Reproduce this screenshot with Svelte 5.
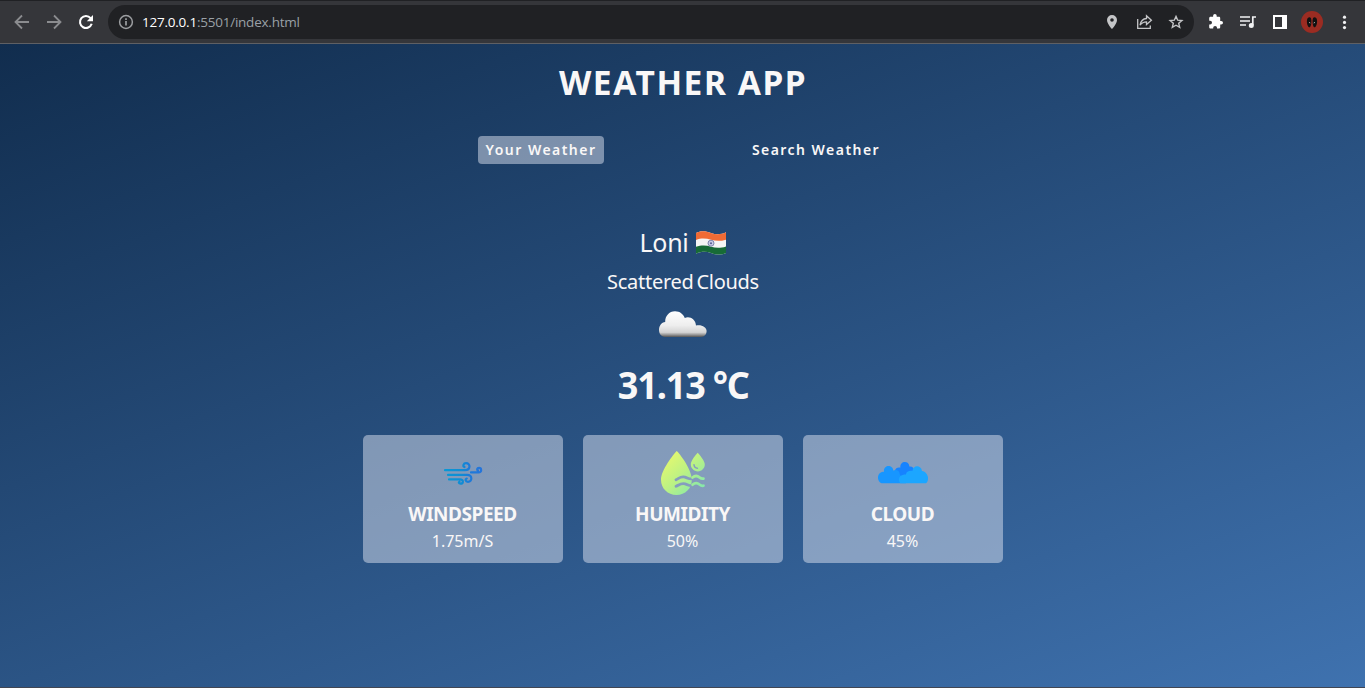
<script>
  const details = [
    { kind: 'wind', label: 'WINDSPEED', value: '1.75m/S' },
    { kind: 'humidity', label: 'HUMIDITY', value: '50%' },
    { kind: 'cloud', label: 'CLOUD', value: '45%' }
  ];
</script>

<div class="window">
  <header class="toolbar">
    <svg class="nav" viewBox="0 0 108 43" fill="none" stroke="#8b8c8f" stroke-width="1.8">
      <path d="M29 22H16M22 15.5L15.5 22L22 28.5" />
      <path d="M47 22H60M54 15.5L60.5 22L54 28.5" />
      <path stroke="#fff" stroke-width="2.1" d="M90.6 18.1A6 6 0 1 0 91.7 23.8" />
      <path fill="#fff" stroke="none" d="M93 15V21.2H86.8Z" />
    </svg>
    <div class="address">
      <svg class="info" viewBox="0 0 16 16" fill="none" stroke="#9c9ea1" stroke-width="1.5">
        <circle cx="8" cy="8" r="6.4" /><path stroke-width="1.7" d="M8 7V11.6M8 4.3V6" />
      </svg>
      <span class="url"><b>127.0.0.1</b>:5501/index.html</span>
      <svg class="actions" viewBox="1100 0 90 34" fill="none" stroke="#c4c5c7" stroke-width="1.4">
        <path fill="#c4c5c7" stroke="none" fill-rule="evenodd" d="M1112 10A5 5 0 0 0 1107 15C1107 18.8 1112 24 1112 24S1117 18.8 1117 15A5 5 0 0 0 1112 10ZM1112 13.2A1.8 1.8 0 1 1 1112 16.8A1.8 1.8 0 1 1 1112 13.2Z" />
        <path stroke-width="1.3" d="M1137.7 14V23.3H1150.3V20.5M1140 20.2C1140.8 16 1143 13.7 1146.5 13.5V10.8L1151.4 15.3L1146.5 19.6V16.8C1143.6 16.8 1141.7 17.8 1140 20.2Z" />
        <path d="M1176 11.4L1177.7 15.2L1181.9 15.6L1178.7 18.3L1179.7 22.4L1176 20.2L1172.3 22.4L1173.3 18.3L1170.1 15.6L1174.3 15.2Z" />
      </svg>
    </div>
    <svg class="tools" viewBox="1194 0 171 43">
      <path fill="#fff" d="M1221.2 21H1220.2V18.1C1220.2 17.2 1219.6 16.7 1218.8 16.7H1216.7V15.8A1.8 1.8 0 0 0 1213.1 15.8V16.7H1210.6C1209.8 16.7 1209.2 17.3 1209.2 18.1V20.7H1210.1A1.9 1.9 0 0 1 1210.1 24.5H1209.2V27.2C1209.2 28 1209.8 28.6 1210.6 28.6H1213.2V27.8A1.9 1.9 0 0 1 1217 27.8V28.6H1218.8C1219.6 28.6 1220.2 28 1220.2 27.2V24.6H1221.2A1.8 1.8 0 0 0 1221.2 21Z" />
      <path fill="none" stroke="#f1f2f3" stroke-width="1.7" d="M1240 17H1250M1240 21H1250M1240 25H1246M1252.8 25V17H1256" />
      <circle cx="1251.3" cy="25.4" r="2.5" fill="#f1f2f3" />
      <path fill="#fff" fill-rule="evenodd" d="M1273 15H1287V29H1273ZM1275 17V27H1282V17Z" />
      <circle cx="1312" cy="22" r="11" fill="#9b2c22" />
      <path fill="#111" d="M1307.4 18.4C1309.5 16.1 1311.4 17.2 1311.4 20.5C1311.4 24 1310.8 27.4 1309.3 27.3C1307.2 26.5 1306.2 21.2 1307.4 18.4ZM1316.6 18.4C1314.5 16.1 1312.6 17.2 1312.6 20.5C1312.6 24 1313.2 27.4 1314.7 27.3C1316.8 26.5 1317.8 21.2 1316.6 18.4Z" />
      <path stroke="#aaa" stroke-width="1" d="M1309 22.4L1310.3 23M1315 22.4L1313.7 23" />
      <g fill="#f1f2f3"><circle cx="1344.5" cy="17.2" r="1.6" /><circle cx="1344.5" cy="22.4" r="1.6" /><circle cx="1344.5" cy="27.6" r="1.6" /></g>
    </svg>
  </header>

  <main>
    <h1>WEATHER APP</h1>
    <nav class="tabs">
      <button class="tab active">Your Weather</button>
      <button class="tab search">Search Weather</button>
    </nav>

    <section class="weather">
      <div class="city">
        <span>Loni</span>
        <svg class="flag" viewBox="0 0 32 24">
          <defs><clipPath id="wave"><path d="M1 2C6-.6 11 .3 16 2S26 3.7 31 1.2V22C26 24.4 21 23.8 16 22S6 20.4 1 22.8Z" /></clipPath></defs>
          <g clip-path="url(#wave)">
            <path fill="#f5f5f5" d="M0 0H32V24H0Z" />
            <path fill="#f06b35" d="M0 0H32V8.3C26 10.4 21 10.2 16 8.8S6 6.8 0 9.3Z" />
            <path fill="#176b36" d="M0 16.2C6 13.8 11 14.2 16 15.7S26 17.4 32 15V24H0Z" />
          </g>
          <circle cx="16" cy="12.2" r="3" fill="#c7cbe5" stroke="#7378a5" stroke-width=".9" />
          <circle cx="16" cy="12.2" r="1" fill="#555b92" />
        </svg>
      </div>
      <p class="description">Scattered Clouds</p>
      <svg class="condition" viewBox="0 0 50 28">
        <defs><linearGradient id="white-cloud" x2="0" y2="1"><stop stop-color="#fff" /><stop offset=".55" stop-color="#eee" /><stop offset=".82" stop-color="#d4d4d4" /><stop offset=".91" stop-color="#999" /><stop offset="1" stop-color="#555" /></linearGradient></defs>
        <path fill="url(#white-cloud)" d="M7 27C3 26.8 1 23.5 1 20C1 15.8 3.6 12.4 7.2 12C7 6 11.2 1.2 17 1.2C22 1.2 25.2 4 26.8 8C31.8 5.8 37.7 9.5 38 15.5C43.3 14.2 48.6 17 48.6 21C48.6 24 46.8 26.8 43 27Z" />
      </svg>
      <p class="temp">31.13 °C</p>

      <div class="cards">
        {#each details as item}
          <article class="card {item.kind}">
            <svg class="icon" viewBox="0 0 50 50">
              {#if item.kind === 'wind'}
                <defs><linearGradient id="breeze" gradientUnits="userSpaceOnUse" x1="6" y1="0" x2="44" y2="0"><stop stop-color="#0899d6" /><stop offset=".5" stop-color="#118bd4" /><stop offset=".64" stop-color="#1c7bd9" /><stop offset="1" stop-color="#2574db" /></linearGradient></defs>
                <path fill="none" stroke="url(#breeze)" stroke-width="2.2" stroke-linecap="round" stroke-linejoin="round" d="M7 22.2H27C32.8 22.2 32.8 15.2 28 15.2C25.3 15.2 24.5 18.2 26.5 19.1M10 26.9H29C34.8 26.9 34.4 33.8 30 33.8C27.2 33.8 26.8 31 28.8 30.5M11 31.4H22C26.2 31.4 25.3 35.8 22.5 35.7C20.8 35.7 20.3 34.2 21.5 33.7M33 24.4H40.5C44.3 24.4 43.6 19.9 41 19.9C38.8 19.9 38.7 22.1 40 22.4" />
              {:else if item.kind === 'humidity'}
                <defs><linearGradient id="dew" gradientUnits="userSpaceOnUse" x1="7" y1="9" x2="40" y2="43"><stop stop-color="#e5f86e" /><stop offset=".5" stop-color="#bdf283" /><stop offset="1" stop-color="#87e8aa" /></linearGradient></defs>
                <path fill="url(#dew)" d="M18.7 3C21.2 5 33.8 21 33.8 31.8C33.8 40.5 27.3 47 18.5 47S3 40.5 3 31.8C3 22.2 15.5 6.3 18.7 3ZM39.7 4.7C41.8 7 46.8 12.9 46.8 16.5C46.8 20.3 43.8 23.4 39.9 23.4S32.8 20.3 32.8 16.5C32.8 12.9 37.6 6.8 39.7 4.7Z" />
                <path fill="none" stroke="#859dbe" stroke-width="2.8" stroke-linecap="round" d="M18 31.7C21 30.3 23 28 27 29.2C31 30.4 32 31.8 35 30.5M18 38.3C21 37 23 34.8 27 35.8C31 37 32 38.5 34.5 37.2" />
                <path fill="none" stroke="url(#dew)" stroke-width="2.7" stroke-linecap="round" d="M34.5 29.6C37 27.4 39.5 27.7 41.5 29.4C43 30.6 44 31 45.5 30.6M34.5 36.7C37 34.5 39.5 34.8 41.5 36.5C43 37.7 44 38.1 45.5 37.7" />
                <path fill="none" stroke="#859dbe" stroke-width="1.5" stroke-linecap="round" d="M36 16.8C36.2 18.8 37.7 20.2 39.4 20.2" />
              {:else}
                <path fill="#1683ff" d="M17 27V22.5C17.5 19.7 20 19 22.4 19.6C21.5 12.8 31 12 31.4 18.5C34.4 18.2 36.3 20 36 24L32 32H20Z" />
                <path fill="#1796ff" d="M3.5 35.3C-.8 33.5-1.2 27 2.4 24.7C3.8 23.8 5 23.7 6 23.9C5 16.2 15.2 16.3 15.2 22.6C18.5 20.8 22 23.2 21.6 26L28 35.3Z" />
                <path fill="#1ca6ff" d="M22.4 35.3C19.4 32.2 20.6 26.4 28 26.5C28 23.4 31.2 22.3 34.6 22.8C34.7 17 43.2 16.7 44 23C50.2 24 51.8 32 48 35.3Z" />
              {/if}
            </svg>
            <h2>{item.label}</h2>
            <p>{item.value}</p>
          </article>
        {/each}
      </div>
    </section>
  </main>
</div>

<style>
  :global(body) { margin: 0; overflow: hidden; }
  .window { width: 1365px; height: 688px; box-sizing: border-box; display: flex; flex-direction: column; border-bottom: 1px solid #414653; font-family: "Noto Sans", sans-serif; color: #f9f7f7; }
  .toolbar { height: 44px; flex: none; box-sizing: border-box; display: flex; align-items: flex-start; background: #35363a; border-top: 1px solid #202124; border-bottom: 1px solid #5f6064; }
  .nav { width: 108px; height: 43px; margin-top: -1px; }
  .address { margin-top: 4px; width: 1086px; height: 34px; box-sizing: border-box; padding-left: 10px; border-radius: 17px; background: #202124; display: flex; align-items: center; }
  .info { width: 16px; height: 16px; }
  .url { margin-left: 8px; font-family: "Open Sans", sans-serif; font-size: 13.5px; letter-spacing: -.23px; color: #9aa0a6; flex: 1; }
  .url b { color: #fff; font-weight: 400; }
  .actions { width: 90px; height: 34px; margin-right: 4px; }
  .tools { width: 171px; height: 43px; margin-top: -1px; }
  main { flex: 1; display: flex; flex-direction: column; align-items: center; background: linear-gradient(160deg, #112d4e 0%, #3f72af 100%); }
  h1 { margin: 18px 0 0; padding-left: 1px; height: 42px; line-height: 40px; font-size: 33.5px; font-weight: 700; letter-spacing: 1.55px; white-space: nowrap; }
  .tabs { width: 410px; margin-top: 32px; display: flex; justify-content: space-between; }
  .tab { border: 0; padding: 0 0 0 1px; height: 28px; border-radius: 4px; background: transparent; color: inherit; font: 600 14px/28px "Noto Sans", sans-serif; letter-spacing: 1.46px; white-space: nowrap; }
  .active { width: 126px; background: rgba(219, 226, 239, .5); }
  .search { width: 144px; padding-left: 1px; }
  .weather { display: flex; flex-direction: column; align-items: center; margin-top: 60px; }
  .city { display: flex; align-items: center; gap: 7px; height: 38px; padding-left: 2px; font-size: 25px; line-height: 36px; letter-spacing: -.3px; }
  .city span { height: 38px; }
  .flag { width: 32px; height: 24px; }
  p { margin: 0; white-space: nowrap; }
  .description { height: 40px; line-height: 40px; padding-left: 1px; font-size: 20px; letter-spacing: -.28px; word-spacing: -2px; }
  .condition { width: 50px; height: 28px; margin-top: 8px; padding-left: 1px; }
  .temp { height: 56px; line-height: 53px; margin-top: 20px; padding-left: 2px; font-size: 38px; font-weight: 700; letter-spacing: -1.1px; word-spacing: -.5px; transform: scaleX(.946); }
  .cards { display: flex; gap: 20px; margin-top: 21px; }
  .card { width: 200px; height: 128px; border-radius: 5px; box-sizing: border-box; padding-top: 13px; background: rgba(219, 226, 239, .5); display: flex; flex-direction: column; align-items: center; }
  .icon { width: 50px; height: 50px; flex: none; }
  h2 { margin: 3px 0 0; height: 26px; line-height: 26px; font-size: 19px; font-weight: 700; letter-spacing: -.45px; }
  .card p { height: 27px; line-height: 29px; font-size: 16px; }
</style>
